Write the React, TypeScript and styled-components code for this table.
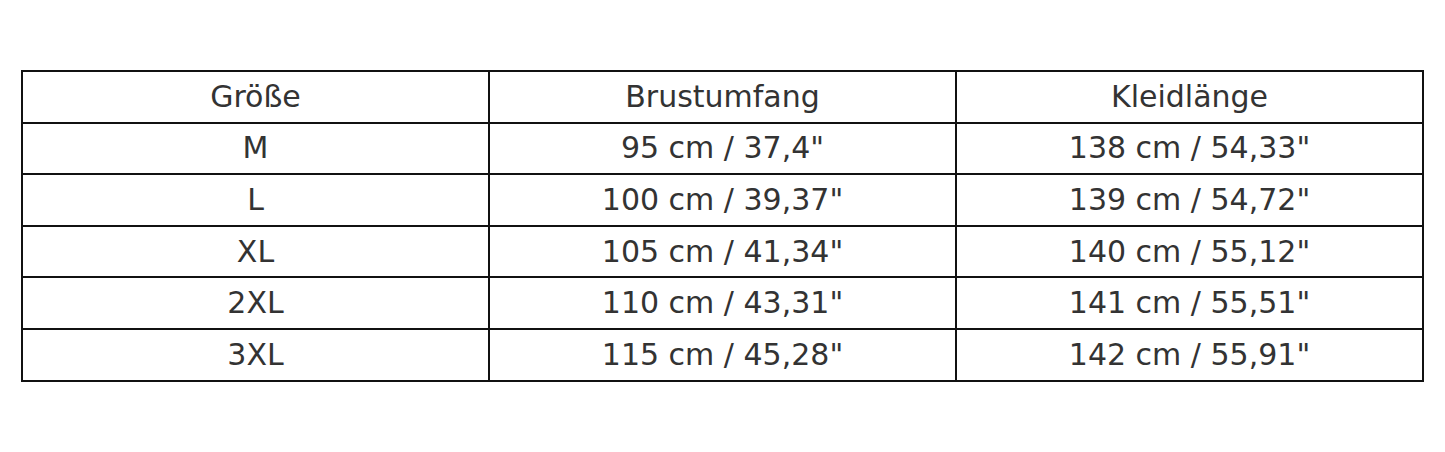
import React from 'react';
import styled, { createGlobalStyle } from 'styled-components';

const GlobalStyle = createGlobalStyle`
  html, body {
    margin: 0;
    padding: 0;
    background: #ffffff;
  }
`;

const Page = styled.div`
  padding: 70px 21px 0 21px;
  font-family: "DejaVu Sans", "Noto Sans", sans-serif;
`;

const Table = styled.table`
  width: 1403px;
  border-collapse: collapse;
  table-layout: fixed;
  border: 2px solid #111;
`;

const Cell = styled.td`
  border: 2px solid #111;
  height: 49.6px;
  padding: 0;
  text-align: center;
  vertical-align: middle;
  font-size: 30px;
  color: #333333;
  line-height: 1;
`;

const rows = [
  ['Größe', 'Brustumfang', 'Kleidlänge'],
  ['M', '95 cm / 37,4"', '138 cm / 54,33"'],
  ['L', '100 cm / 39,37"', '139 cm / 54,72"'],
  ['XL', '105 cm / 41,34"', '140 cm / 55,12"'],
  ['2XL', '110 cm / 43,31"', '141 cm / 55,51"'],
  ['3XL', '115 cm / 45,28"', '142 cm / 55,91"'],
];

const App = () => {
  return (
    <>
      <GlobalStyle />
      <Page>
        <Table>
          <tbody>
            {rows.map((r, i) => (
              <tr key={i}>
                {r.map((c, j) => (
                  <Cell key={j}>{c}</Cell>
                ))}
              </tr>
            ))}
          </tbody>
        </Table>
      </Page>
    </>
  );
};

export default App;
